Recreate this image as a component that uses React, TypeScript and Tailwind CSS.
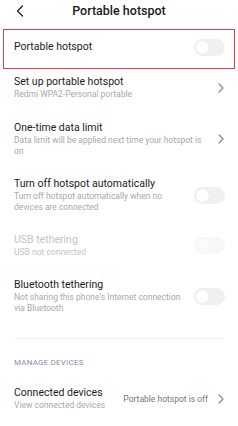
import React from 'react'

function Toggle({ disabled }: { disabled?: boolean }) {
  return (
    <div
      className={`shrink-0 w-[31px] h-[17px] rounded-full flex items-center px-[2px] ${
        disabled ? 'bg-[#f7f7f7]' : 'bg-[#f0f0f0]'
      }`}
    >
      <div
        className={`w-[13px] h-[13px] rounded-full ${
          disabled ? 'bg-[#fbfbfb]' : 'bg-white shadow-[0_0_1px_rgba(0,0,0,0.08)]'
        }`}
      />
    </div>
  )
}

function Chevron() {
  return (
    <svg width="6" height="10" viewBox="0 0 6 10" className="shrink-0">
      <path d="M1 1l4 4-4 4" fill="none" stroke="#8a8a8a" strokeWidth="1.2" strokeLinecap="round" strokeLinejoin="round" />
    </svg>
  )
}

function Row({
  title,
  sub,
  right,
  muted,
  className = '',
}: {
  title: string
  sub: string
  right: React.ReactNode
  muted?: boolean
  className?: string
}) {
  return (
    <div className={`flex items-center pl-[14px] pr-[13px] ${className}`}>
      <div className="flex-1 min-w-0">
        <div className={`text-[10.5px] leading-[14px] ${muted ? 'text-[#c4c4c4]' : 'text-[#1c1c1c]'}`}>{title}</div>
        <div className={`text-[8.5px] leading-[11px] ${muted ? 'text-[#c4c4c4]' : 'text-[#a9a9a9]'}`}>{sub}</div>
      </div>
      {right}
    </div>
  )
}

export default function App() {
  return (
    <div className="w-[238px] h-[426px] bg-white font-[Roboto,sans-serif] overflow-hidden">
      <header className="h-[29px] relative flex items-start justify-center pt-[3px]">
        <svg width="8" height="12" viewBox="0 0 8 12" className="absolute left-[16px] top-[5px]">
          <path d="M6.5 1L1.5 6l5 5" fill="none" stroke="#222" strokeWidth="1.3" strokeLinecap="round" strokeLinejoin="round" />
        </svg>
        <h1 className="text-[12.5px] leading-[16px] font-medium text-[#1a1a1a]">Portable hotspot</h1>
      </header>

      <div className="mx-[3px] h-[40px] border border-[#d9414d] flex items-center pl-[10px] pr-[9px] pb-[4px]">
        <span className="flex-1 text-[10.5px] leading-[14px] text-[#1c1c1c]">Portable hotspot</span>
        <Toggle />
      </div>

      <Row
        className="pt-[6px] pb-[11px] pr-[14px]"
        title="Set up portable hotspot"
        sub="Redmi WPA2-Personal portable"
        right={<Chevron />}
      />
      <Row
        className="py-[10px] pr-[14px]"
        title="One-time data limit"
        sub="Data limit will be applied next time your hotspot is on"
        right={<div className="pl-[12px]"><Chevron /></div>}
      />
      <Row
        className="py-[10px]"
        title="Turn off hotspot automatically"
        sub="Turn off hotspot automatically when no devices are connected"
        right={<div className="pl-[10px]"><Toggle /></div>}
      />
      <Row
        className="py-[10px]"
        muted
        title="USB tethering"
        sub="USB not connected"
        right={<div className="pl-[10px]"><Toggle disabled /></div>}
      />
      <Row
        className="py-[10px]"
        title="Bluetooth tethering"
        sub="Not sharing this phone's Internet connection via Bluetooth"
        right={<div className="pl-[10px]"><Toggle /></div>}
      />

      <div className="mx-[14px] mt-[14px] h-px bg-[#f0f0f0]" />

      <div className="pl-[14px] mt-[19px] text-[8px] leading-[10px] text-[#8a8ea6] tracking-[0.2px]">MANAGE DEVICES</div>

      <div className="flex items-center pl-[14px] pr-[14px] mt-[18px] pb-[15px] border-b border-[#f0f0f0]">
        <div className="flex-1">
          <div className="text-[10.5px] leading-[14px] text-[#1c1c1c]">Connected devices</div>
          <div className="text-[8.5px] leading-[11px] text-[#a9a9a9]">View connected devices</div>
        </div>
        <span className="text-[8.5px] leading-[12px] text-[#777] mr-[10px]">Portable hotspot is off</span>
        <Chevron />
      </div>
    </div>
  )
}
